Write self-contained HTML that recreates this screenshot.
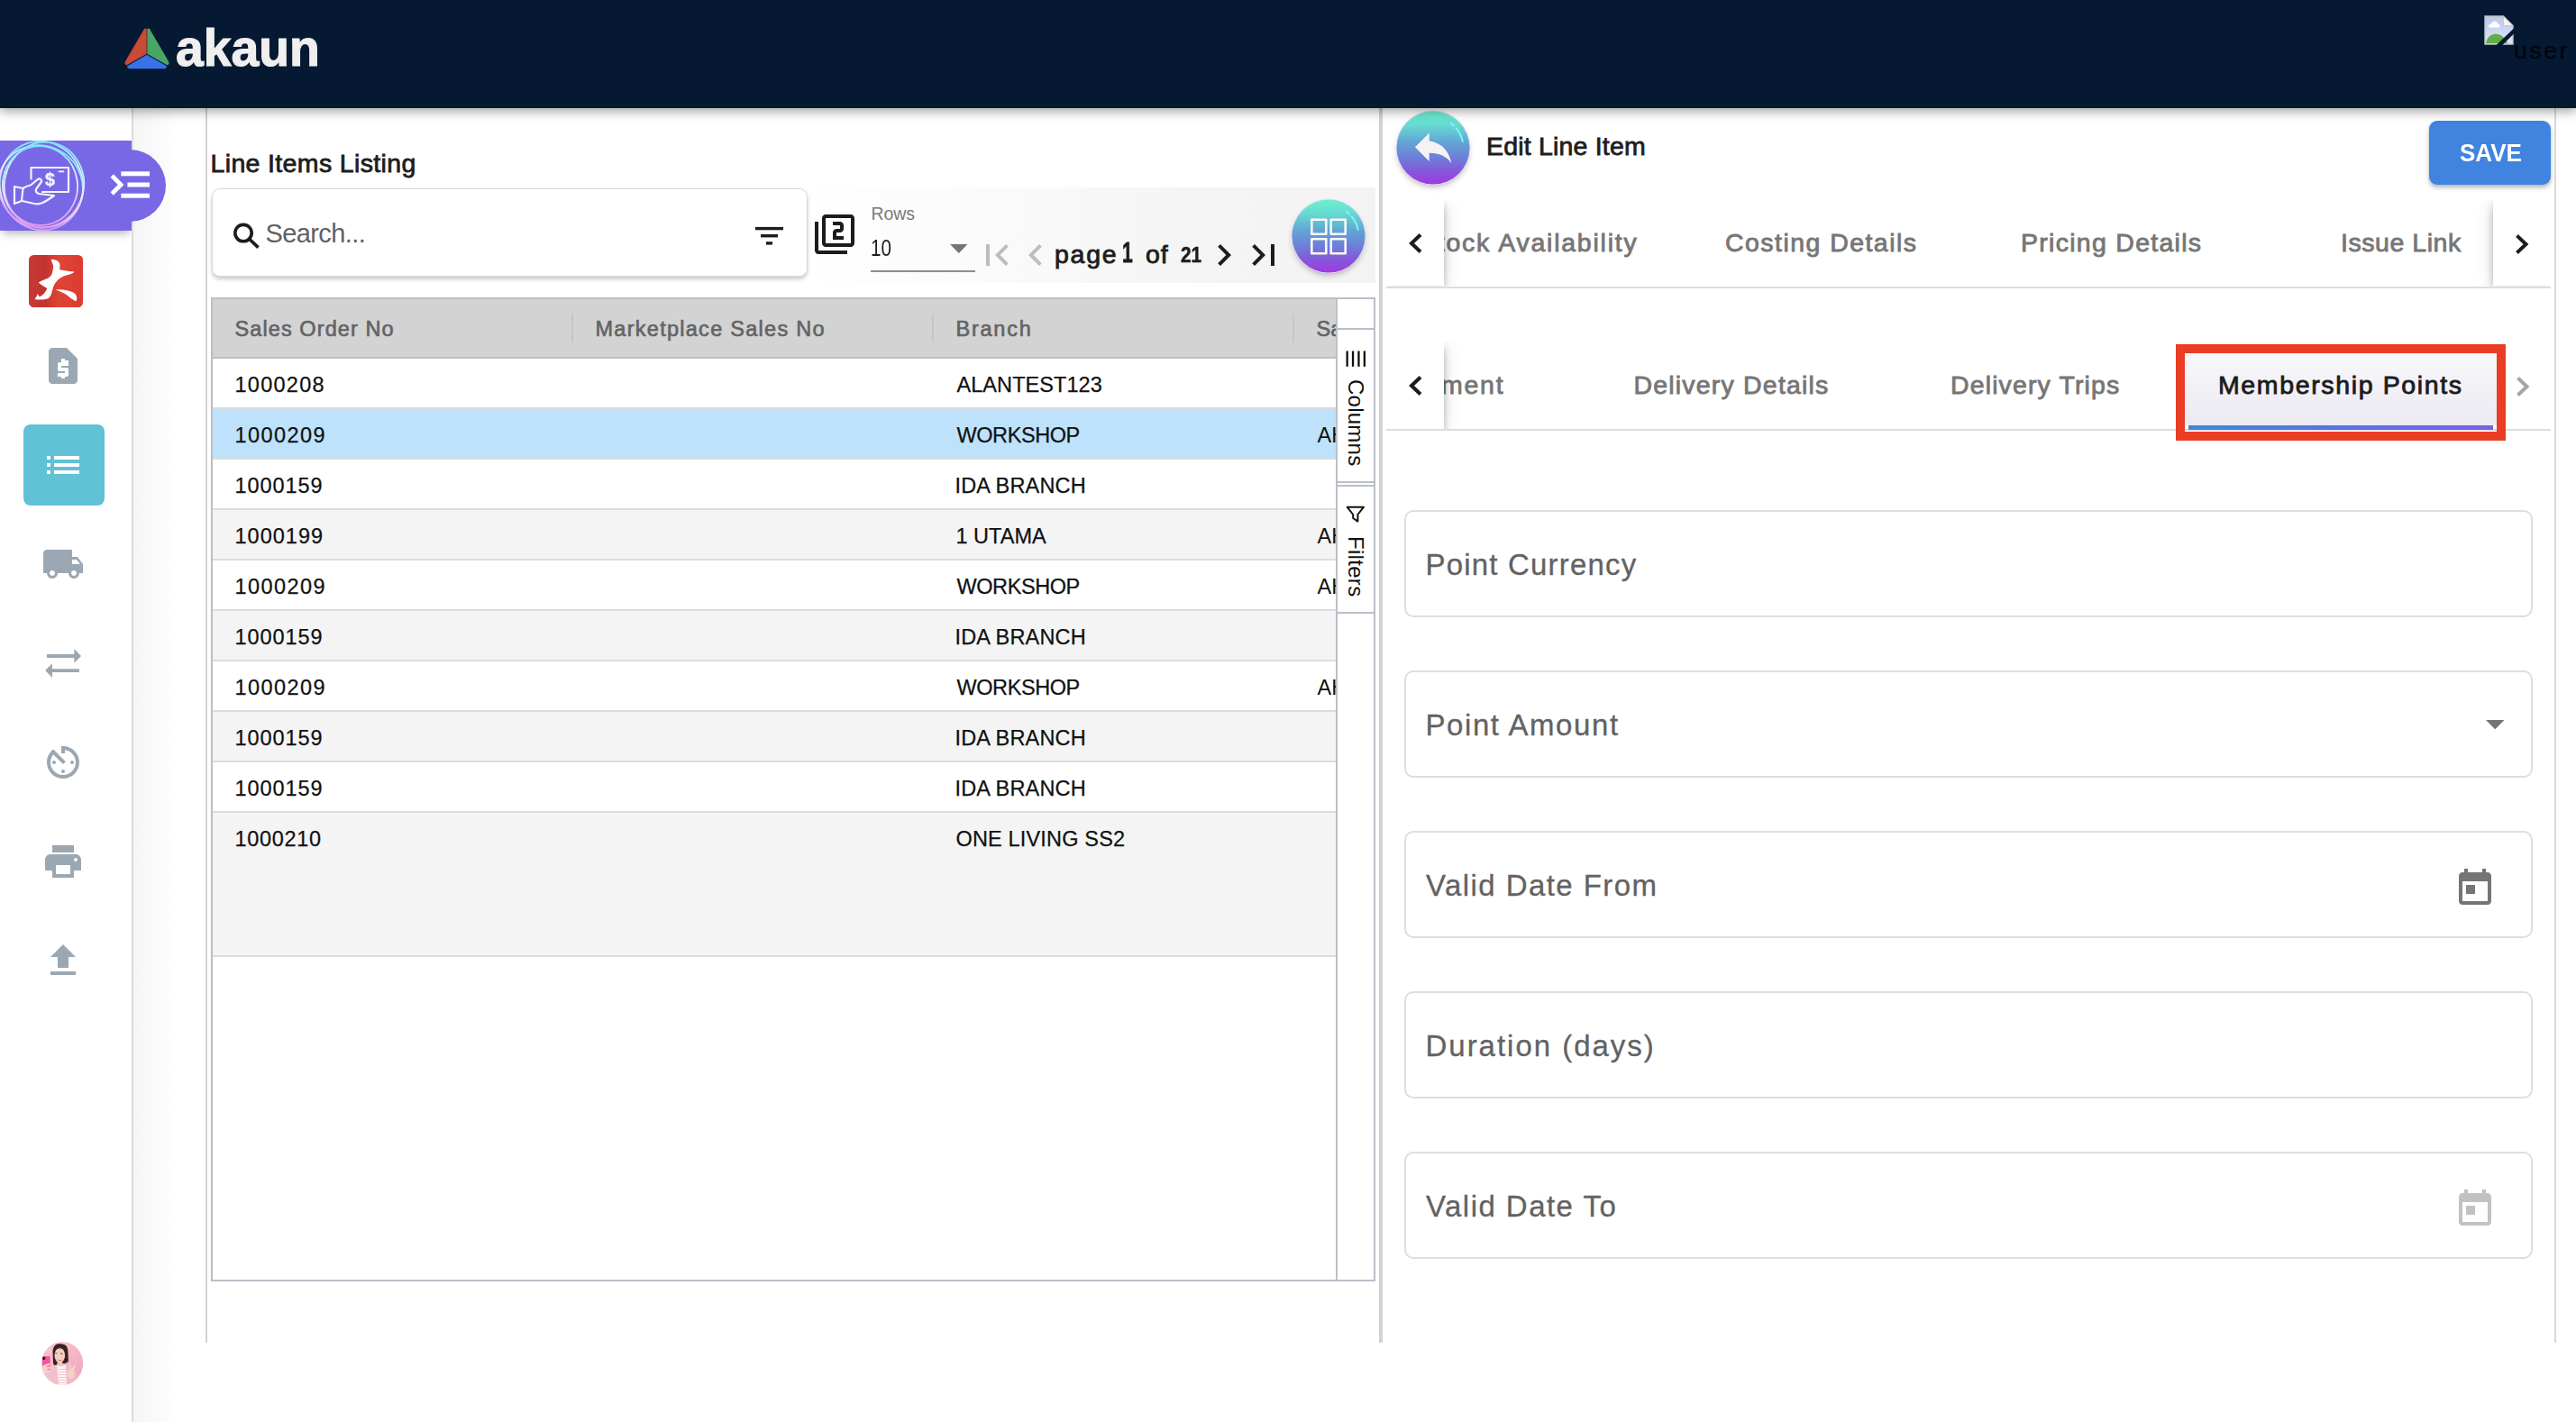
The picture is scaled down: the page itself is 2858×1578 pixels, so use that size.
<!DOCTYPE html>
<html lang="en"><head><meta charset="utf-8"><title>akaun - Edit Line Item</title>
<style>
*{box-sizing:border-box;margin:0;padding:0}
html,body{width:2858px;height:1578px;background:#fff;overflow:hidden}
body{font-family:"Liberation Sans",sans-serif;position:relative}
#app{position:absolute;left:0;top:0;width:2858px;height:1578px;overflow:hidden;background:#fff}
#app div,#app span.t,#app svg.a{position:absolute}
span.t{white-space:nowrap;display:block}
.clip{overflow:hidden}
</style></head>
<body><div id="app">
<div class="hdr" style="left:0px;top:0px;width:2858px;height:120px;background:#061932;box-shadow:0 3px 12px rgba(0,0,0,.4);z-index:20"><svg class="a" style="left:130px;top:24px" width="66" height="60" viewBox="130 24 66 60"><path d="M161.9 33.2 Q162 31.6 160.6 32.6 L139.6 68.6 Q138.6 71 140.6 71.4 L161.9 59.2 Z" fill="#c94a35" stroke="#c94a35" stroke-width="1.6" stroke-linejoin="round"/><path d="M164.1 33.2 Q164 31.6 165.4 32.6 L186.4 68.6 Q187.4 71 185.4 71.4 L164.1 59.2 Z" fill="#49a567" stroke="#49a567" stroke-width="1.6" stroke-linejoin="round"/><path d="M163 61.6 L142 73.6 Q141.4 75.2 143.4 75.4 L182.6 75.4 Q184.6 75.2 184 73.6 Z" fill="#3871e8" stroke="#3871e8" stroke-width="1.6" stroke-linejoin="round"/></svg><span class="t" style="left:195.0px;top:23.9px;font-size:58px;line-height:58px;color:#efefef;font-weight:700;transform:scaleX(0.953);transform-origin:0 0;-webkit-text-stroke:1.2px #efefef;">akaun</span><svg class="a" style="left:2755.500px;top:16.500px" width="33" height="33" viewBox="0 0 34 34"><defs><linearGradient id="sky" x1="0" y1="0" x2="0" y2="1"><stop offset="0" stop-color="#b9c9ee"/><stop offset="1" stop-color="#dfe7f8"/></linearGradient></defs><path d="M1 1 H22 L33 12 V33 H1 Z" fill="url(#sky)" stroke="#c4c4c4" stroke-width="1.4"/><path d="M22 1 V12 H33 Z" fill="#f4f4f4" stroke="#c4c4c4" stroke-width="1"/><path d="M2 32 Q4 22 13 21 Q22 21 27 32 Z" fill="#62ad49"/><path d="M5 13 Q5 10 8 10 Q9 7 12 7 Q15 7 16 10 Q18 10 18 12.5 Q18 14 16 14 H7 Q5 14 5 13Z" fill="#fff"/><path d="M14 34 L34 15 L34 21 L21 34 Z" fill="#061932"/></svg><span class="t" style="left:2789.0px;top:42.8px;font-size:26.5px;line-height:26.5px;color:#01060f;letter-spacing:2.59px;-webkit-text-stroke:0.5px #01060f;">user</span></div><div style="left:0px;top:120px;width:146px;height:1458px;background:#fff"></div><div style="left:146px;top:120px;width:2px;height:1458px;background:#dcdcdc"></div><div style="left:148px;top:120px;width:52px;height:1458px;background:linear-gradient(to right,#f5f5f5,#fff)"></div><div style="left:0px;top:156px;width:146px;height:100px;background:#7968e5;box-shadow:0 6px 9px -3px rgba(0,0,0,.3);clip-path:inset(0 0 -20px 0)"></div><div style="left:100px;top:166px;width:84px;height:80px;background:#7968e5;border-radius:40px"></div><svg class="a" style="left:0;top:150px" width="146" height="112" viewBox="0 150 146 112" fill="none"><defs><linearGradient id="rg" x1="0" y1="0" x2="0" y2="1"><stop offset="0" stop-color="#7fe3fb"/><stop offset=".5" stop-color="#e9eefc"/><stop offset="1" stop-color="#dc98f4"/></linearGradient></defs><g stroke="url(#rg)" stroke-width="1.8"><ellipse cx="46" cy="206" rx="46" ry="49.500" transform="rotate(-15 46 206)"/><ellipse cx="45" cy="207" rx="47.500" ry="45" transform="rotate(30 45 207)"/><ellipse cx="49" cy="205" rx="44" ry="47.500" transform="rotate(12 49 205)"/><ellipse cx="44.500" cy="206" rx="41.500" ry="44" transform="rotate(-8 44.500 206)"/></g></svg><svg class="a" style="left:10px;top:180px" width="72" height="52" viewBox="10 180 72 52" fill="none" stroke="#f4f2ff" stroke-width="2.2" stroke-linejoin="round" stroke-linecap="round"><path d="M34.5 198.5 V186 H76 V213 H47"/><path d="M65.5 190.3 H70.5" stroke-width="1.8"/><path d="M16 207 L25.5 209 L24 223 L16 226 Z"/><path d="M25.5 209 Q29 206.5 34 205.5 L42 199 Q44.5 197.5 46 200 Q46.5 201.5 45 203 L40 210 Q39 213.5 43 215 L60 217 Q52 223 46 225.5 Q42 226.8 38 226 L24.5 223"/></svg><span class="t" style="left:49.8px;top:188.9px;font-size:20px;line-height:20px;color:#f4f2ff;font-weight:700;transform:scaleX(0.982);transform-origin:0 0;-webkit-text-stroke:0.4px #f4f2ff;">$</span><svg class="a" style="left:120px;top:186px" width="50" height="38" viewBox="120 186 50 38"><g fill="#fff"><rect x="134.3" y="190.3" width="31.7" height="5"/><rect x="141.4" y="202.5" width="24.6" height="5"/><rect x="134.3" y="214.7" width="31.7" height="5"/></g><path d="M124.2 195 L134.2 205 L124.2 215" fill="none" stroke="#fff" stroke-width="4.6"/></svg><svg class="a" style="left:32px;top:283px" width="60" height="58" viewBox="0 0 60 58"><defs><linearGradient id="rd" x1="0" y1="0" x2="1" y2="0"><stop offset="0" stop-color="#c63a35"/><stop offset=".3" stop-color="#c23330"/><stop offset=".55" stop-color="#df4434"/><stop offset="1" stop-color="#dc3b31"/></linearGradient></defs><rect width="60" height="58" rx="5.5" fill="url(#rd)"/><path d="M24.8 4.8 C28 4.8 32.6 6 34 9 C35 12 34 14 34.2 16.2 C40 17.6 46 17.8 50.4 18.6 C49.6 21 44 21.6 38.6 23.6 C33 26 29.6 30 27.4 35 C25.6 39.6 25.6 44 22.6 47.4 C19 50 12 49.4 7 49.2 C6.6 48 9.6 45.4 9.6 43 C11 44.4 11 46 11.6 46.2 C14.6 45.6 17.4 43 20.4 37 C17 35 13.6 33.4 10.8 30.6 C11.4 29.4 19 27.2 22.6 24.8 C26 22.6 26.4 19 27.2 12.6 C26.6 9 24.4 6.6 24.8 4.8 Z" fill="#fff"/><path d="M29.6 38.4 C36 37.6 44 38.6 49.8 41.8 C53.6 44.4 54 48.6 52.4 51.2 C48.6 50.4 44 45.4 39.6 42.8 C36 40.6 32 39.4 29.6 38.4 Z" fill="#fff"/></svg><svg class="a" style="left:46px;top:382px" width="48" height="48" viewBox="0 0 24 24" fill="#9ba8b3" ><path d="M14 2H6c-1.1 0-2 .9-2 2v16c0 1.1.9 2 2 2h12c1.1 0 2-.9 2-2V8l-6-6zm1 10h-4v1h3c.55 0 1 .45 1 1v3c0 .55-.45 1-1 1h-1v1h-2v-1H9v-2h4v-1h-3c-.55 0-1-.45-1-1v-3c0-.55.45-1 1-1h1V8h2v1h2v2z"/></svg><div style="left:26px;top:471px;width:90px;height:90px;background:#60c1d7;border-radius:8px"></div><svg class="a" style="left:46px;top:492px" width="48" height="48" viewBox="0 0 24 24" fill="#fff" ><path d="M3 13h2v-2H3v2zm0 4h2v-2H3v2zm0-8h2V7H3v2zm4 4h14v-2H7v2zm0 4h14v-2H7v2zM7 7v2h14V7H7z"/></svg><svg class="a" style="left:46px;top:602px" width="48" height="48" viewBox="0 0 24 24" fill="#9ba8b3" ><path d="M20 8h-3V4H3c-1.1 0-2 .9-2 2v11h2c0 1.66 1.34 3 3 3s3-1.34 3-3h6c0 1.66 1.34 3 3 3s3-1.34 3-3h2v-5l-3-4zM6 18.5c-.83 0-1.5-.67-1.5-1.5s.67-1.5 1.5-1.5 1.5.67 1.5 1.5-.67 1.5-1.5 1.5zm13.500-9l1.960 2.500H17V9.500h2.500zm-1.500 9c-.83 0-1.5-.67-1.5-1.500s.67-1.500 1.500-1.500 1.500.67 1.500 1.500-.67 1.500-1.500 1.500z"/></svg><svg class="a" style="left:46px;top:712px" width="48" height="48" viewBox="46 712 48 48" fill="#9ba8b3"><path d="M52 726 H82.3 V720 L90 728 L82.3 735.8 V730 H52 Z"/><path d="M88 742.2 H57.9 V736.3 L50.2 744.1 L57.9 752 V745.9 H88 Z"/></svg><svg class="a" style="left:46px;top:822px" width="48" height="48" viewBox="0 0 24 24" fill="#9ba8b3" ><path d="M11 17c0 .55.45 1 1 1s1-.45 1-1-.45-1-1-1-1 .45-1 1zm0-14v4h2V5.080c3.390.49 6 3.390 6 6.920 0 3.870-3.130 7-7 7s-7-3.130-7-7c0-1.680.59-3.220 1.580-4.420L12 13l1.410-1.410-6.800-6.800v.02C4.420 6.450 3 9.050 3 12c0 4.970 4.020 9 9 9 4.970 0 9-4.030 9-9s-4.030-9-9-9h-1zm7 9c0-.55-.45-1-1-1s-1 .45-1 1 .45 1 1 1 1-.45 1-1zM6 12c0 .55.45 1 1 1s1-.45 1-1-.45-1-1-1-1 .45-1 1z"/></svg><svg class="a" style="left:46px;top:932px" width="48" height="48" viewBox="0 0 24 24" fill="#9ba8b3" ><path d="M19 8H5c-1.660 0-3 1.340-3 3v6h4v4h12v-4h4v-6c0-1.660-1.340-3-3-3zm-3 11H8v-5h8v5zm3-7c-.55 0-1-.45-1-1s.45-1 1-1 1 .45 1 1-.45 1-1 1zm-1-9H6v4h12V3z"/></svg><svg class="a" style="left:46px;top:1042px" width="48" height="48" viewBox="0 0 24 24" fill="#9ba8b3" ><path d="M9 16h6v-6h4l-7-7-7 7h4zm-4 2h14v2H5z"/></svg><svg class="a" style="left:46px;top:1489px" width="46.200" height="48" viewBox="0 0 46 48"><defs><clipPath id="av"><ellipse cx="23" cy="24" rx="23" ry="24"/></clipPath><linearGradient id="avb" x1="0" y1="0" x2="1" y2="1"><stop offset="0" stop-color="#f8c9d3"/><stop offset="1" stop-color="#efa5bb"/></linearGradient><filter id="avf" x="-10%" y="-10%" width="120%" height="120%"><feGaussianBlur stdDeviation="0.45"/></filter></defs><g clip-path="url(#av)"><rect width="46" height="48" fill="url(#avb)"/><g filter="url(#avf)"><path d="M17.500 2.600 C14 3.600 12.200 8 12.400 12 L12.900 23.600 Q13.600 26.600 15.200 27.600 L18 24 L26.500 24 L27.400 23.300 Q29.900 23 29.800 21 L29.300 11.800 C29.400 7 28 4.200 25.600 3.200 C23 2 20 2 17.500 2.600 Z" fill="#37211f"/><ellipse cx="20.200" cy="15.200" rx="5.800" ry="8.300" fill="#f4cfc1"/><path d="M14.800 9 Q17 5.500 20.500 5 Q24 5.500 26.200 9.500 Q23 7 20.500 7.200 Q17.500 7 14.800 9Z" fill="#4a2e2a"/><rect x="17.400" y="22.500" width="5.800" height="5" fill="#f1c6b7"/><path d="M10.800 26.400 L17.500 25.500 L18 48 L3 48 L4 40 Q5.500 30 10.800 26.400 Z" fill="#f4bfcd"/><path d="M26.800 25.800 L34 28.600 Q38.500 31.500 39.500 40 L40 48 L26 48 Z" fill="#f2b9c9"/><path d="M17 26 Q20.500 28.500 26.800 25.600 L27.800 48 L18.800 48 Z" fill="#fdf3f3"/><g stroke="#f6c5cf" stroke-width="1"><path d="M18 30.500 H27 M18.200 33.500 H27.200 M18.400 36.500 H27.400 M18.600 39.500 H27.500 M18.700 42.500 H27.600 M18.800 45.500 H27.700"/></g><rect x="0.800" y="16" width="8.700" height="17" rx="1.400" fill="#ee56a4"/><rect x="1.200" y="16.800" width="2.800" height="3.200" rx="0.800" fill="#2c1a22"/><path d="M0.600 27 Q4 24.500 9 23.800 L9.500 25.400 L4.500 28 L10 27.500 L10.200 29.500 L4.800 31 L10 31.200 L9.800 33.200 L5 34 Q2.500 35.800 0.600 35 Z" fill="#f6d3c5"/><path d="M31 24.400 L32.200 24.600 L33 31 L36.800 25 L38 25.600 L35.600 32.500 Q36.400 36 35 39.500 Q32.500 42 29.800 40 Q28 36.500 29 32.500 Q30 31 31.400 31.400 Z" fill="#f5d2c3"/><path d="M16.800 19.600 Q20.200 22.800 23.600 19.400 Q20.200 20.600 16.800 19.600 Z" fill="#d9596f"/><path d="M17.400 19.700 Q20.200 21 23 19.600 Q20.200 20.200 17.400 19.700Z" fill="#fff"/><ellipse cx="16.200" cy="12.800" rx="1.300" ry="0.500" fill="#5a3a36"/><ellipse cx="22" cy="13.100" rx="1.300" ry="0.700" fill="#4a2c2a"/></g></g></svg><div style="left:228px;top:120px;width:2px;height:1370px;background:#d1d1d1"></div><span class="t" style="left:233.5px;top:166.9px;font-size:28.5px;line-height:28.5px;color:#1d1d1d;letter-spacing:0.35px;-webkit-text-stroke:0.8px #1d1d1d;">Line Items Listing</span><div style="left:880px;top:208px;width:646px;height:106px;background:linear-gradient(to right,#fff,#fbfbfb 30%,#f5f5f5 65%,#f3f3f3)"></div><div style="left:235px;top:209px;width:660.5px;height:97.5px;background:#fff;border:1.5px solid #d9d9d9;border-radius:9px;box-shadow:0 3px 4px rgba(0,0,0,.2)"></div><svg class="a" style="left:256px;top:244px" width="36" height="36" viewBox="256 244 36 36" fill="none" stroke="#1c1c1c" stroke-width="3.6"><circle cx="270" cy="258.600" r="9.2"/><path d="M276.600 265.200 L286.500 274.600"/></svg><span class="t" style="left:294.5px;top:244.5px;font-size:29px;line-height:29px;color:#616161;letter-spacing:-0.60px;">Search...</span><svg class="a" style="left:836px;top:250px" width="36" height="24" viewBox="836 250 36 24" fill="#1c1c1c"><rect x="838" y="251.900" width="31" height="3.4"/><rect x="844" y="260" width="19" height="3.4"/><rect x="850" y="268.200" width="7" height="3.400"/></svg><svg class="a" style="left:902px;top:236px" width="48" height="48" viewBox="0 0 24 24" fill="#1c1c1c" ><path d="M3 5H1v16c0 1.100.9 2 2 2h16v-2H3V5zm18-4H7c-1.100 0-2 .9-2 2v14c0 1.100.9 2 2 2h14c1.100 0 2-.9 2-2V3c0-1.100-.9-2-2-2zm0 16H7V3h14v14zm-4-4h-4v-2h2c1.100 0 2-.89 2-2V7c0-1.110-.9-2-2-2h-4v2h4v2h-2c-1.100 0-2 .89-2 2v4h6v-2z"/></svg><span class="t" style="left:966.5px;top:228.1px;font-size:19.5px;line-height:19.5px;color:#7b7b7b;letter-spacing:-0.07px;">Rows</span><span class="t" style="left:966.4px;top:261.8px;font-size:26px;line-height:26px;color:#1d1d1d;transform:scaleX(0.794);transform-origin:0 0;">10</span><svg class="a" style="left:1054px;top:271px" width="20" height="10" viewBox="0 0 20 10"><path d="M0 0 H19.5 L9.750 10 Z" fill="#757575"/></svg><div style="left:966px;top:300px;width:116px;height:2px;background:#8d8d8d"></div><svg class="a" style="left:1082px;top:259px" width="48" height="48" viewBox="0 0 24 24" fill="#bdbdbd" ><path d="M18.410 16.590L13.820 12l4.590-4.590L17 6l-6 6 6 6zM6 6h2v12H6z"/></svg><svg class="a" style="left:1125px;top:259px" width="48" height="48" viewBox="0 0 24 24" fill="#bdbdbd" ><path d="M15.410 7.410L14 6l-6 6 6 6 1.410-1.410L10.830 12z"/></svg><span class="t" style="left:1170.0px;top:267.5px;font-size:28.5px;line-height:28.5px;color:#1d1d1d;letter-spacing:1.72px;-webkit-text-stroke:0.85px #1d1d1d;">page</span><span class="t" style="left:1244.9px;top:265.4px;font-size:31px;line-height:31px;color:#1d1d1d;font-weight:700;transform:scaleX(0.681);transform-origin:0 0;-webkit-text-stroke:0.8px #1d1d1d;">1</span><span class="t" style="left:1271.0px;top:267.5px;font-size:28.5px;line-height:28.5px;color:#1d1d1d;letter-spacing:0.95px;-webkit-text-stroke:0.85px #1d1d1d;">of</span><span class="t" style="left:1310.0px;top:270.9px;font-size:24.5px;line-height:24.5px;color:#1d1d1d;font-weight:700;transform:scaleX(0.853);transform-origin:0 0;-webkit-text-stroke:0.5px #1d1d1d;">21</span><svg class="a" style="left:1333.8px;top:259px" width="48" height="48" viewBox="0 0 24 24" fill="#1c1c1c" ><path d="M10 6L8.590 7.410 13.170 12l-4.580 4.590L10 18l6-6z"/></svg><svg class="a" style="left:1377.8px;top:259px" width="48" height="48" viewBox="0 0 24 24" fill="#1c1c1c" ><path d="M5.590 7.410L10.180 12l-4.590 4.590L7 18l6-6-6-6zM16 6h2v12h-2z"/></svg><svg class="a" style="left:1419px;top:207px;overflow:visible" width="110" height="116" viewBox="-55 -55 110 116"><defs><linearGradient id="g1" x1="0" y1="0" x2="0" y2="1"><stop offset="0" stop-color="#6cf0d2"/><stop offset=".18" stop-color="#66dcd2"/><stop offset=".42" stop-color="#62a6d5"/><stop offset=".62" stop-color="#6c82d8"/><stop offset=".82" stop-color="#8558da"/><stop offset="1" stop-color="#a238e0"/></linearGradient><filter id="g1f" x="-30%" y="-30%" width="160%" height="170%"><feGaussianBlur stdDeviation="3.5"/></filter></defs><circle cx="0" cy="4" r="39" fill="rgba(0,0,0,.32)" filter="url(#g1f)"/><circle cx="0" cy="0" r="41.400" fill="#eadff3"/><circle cx="0" cy="0" r="40.500" fill="url(#g1)"/><path d="M19.700 -27.100 A33.500 33.500 0 0 1 22.900 -24.400" fill="none" stroke="#84f3f6" stroke-width="2" stroke-linecap="round"/><path d="M25.400 -21.800 A33.500 33.500 0 0 1 32.800 -7.100" fill="none" stroke="#84f3f6" stroke-width="2" stroke-linecap="round"/><g fill="none" stroke="#fbf8f6" stroke-width="2.6" stroke-linejoin="round"><rect x="-18.700" y="-18.200" width="16" height="16"/><rect x="2.700" y="-18.200" width="16" height="16"/><rect x="-18.700" y="3.300" width="16" height="16"/><rect x="2.700" y="3.300" width="16" height="16"/></g></svg><div style="left:234px;top:330px;width:1292px;height:1092px;border:2px solid #babfc7;background:#fff"></div><div style="left:236px;top:332px;width:1246px;height:64px;background:#d3d3d3"></div><div style="left:236px;top:396px;width:1246px;height:2px;background:#babfc7"></div><div style="left:634px;top:348px;width:2px;height:32px;background:#c2c7cd"></div><div style="left:1034px;top:348px;width:2px;height:32px;background:#c2c7cd"></div><div style="left:1434px;top:348px;width:2px;height:32px;background:#c2c7cd"></div><span class="t" style="left:260.5px;top:353.7px;font-size:23.5px;line-height:23.5px;color:#636466;letter-spacing:1.09px;-webkit-text-stroke:0.65px #636466;">Sales Order No</span><span class="t" style="left:660.5px;top:353.7px;font-size:23.5px;line-height:23.5px;color:#636466;letter-spacing:1.27px;-webkit-text-stroke:0.65px #636466;">Marketplace Sales No</span><span class="t" style="left:1060.5px;top:353.7px;font-size:23.5px;line-height:23.5px;color:#636466;letter-spacing:1.76px;-webkit-text-stroke:0.65px #636466;">Branch</span><div class="clip" style="left:1440px;top:340px;width:42px;height:50px;"><span class="t" style="left:20.5px;top:13.7px;font-size:23.5px;line-height:23.5px;color:#636466;-webkit-text-stroke:0.65px #636466;">Sa</span></div><div style="left:236px;top:398px;width:1246px;height:54px;background:#fff"></div><div style="left:236px;top:452px;width:1246px;height:2px;background:#dadde0"></div><span class="t" style="left:260.5px;top:415.5px;font-size:23.5px;line-height:23.5px;color:#111;letter-spacing:1.26px;-webkit-text-stroke:0.25px #111;">1000208</span><span class="t" style="left:1061.5px;top:415.5px;font-size:23.5px;line-height:23.5px;color:#111;letter-spacing:0.06px;-webkit-text-stroke:0.25px #111;">ALANTEST123</span><div style="left:236px;top:454px;width:1246px;height:54px;background:#bee2fb"></div><div style="left:236px;top:508px;width:1246px;height:2px;background:#dadde0"></div><span class="t" style="left:260.5px;top:471.5px;font-size:23.5px;line-height:23.5px;color:#111;letter-spacing:1.43px;-webkit-text-stroke:0.25px #111;">1000209</span><span class="t" style="left:1061.5px;top:471.5px;font-size:23.5px;line-height:23.5px;color:#111;letter-spacing:-0.43px;-webkit-text-stroke:0.25px #111;">WORKSHOP</span><div class="clip" style="left:1440px;top:454px;width:42px;height:54px;"><span class="t" style="left:21.5px;top:17.5px;font-size:23.5px;line-height:23.5px;color:#111;">AH</span></div><div style="left:236px;top:510px;width:1246px;height:54px;background:#fff"></div><div style="left:236px;top:564px;width:1246px;height:2px;background:#dadde0"></div><span class="t" style="left:260.5px;top:527.5px;font-size:23.5px;line-height:23.5px;color:#111;letter-spacing:0.93px;-webkit-text-stroke:0.25px #111;">1000159</span><span class="t" style="left:1059.5px;top:527.5px;font-size:23.5px;line-height:23.5px;color:#111;letter-spacing:0.17px;-webkit-text-stroke:0.25px #111;">IDA BRANCH</span><div style="left:236px;top:566px;width:1246px;height:54px;background:#f4f4f4"></div><div style="left:236px;top:620px;width:1246px;height:2px;background:#dadde0"></div><span class="t" style="left:260.5px;top:583.5px;font-size:23.5px;line-height:23.5px;color:#111;letter-spacing:1.01px;-webkit-text-stroke:0.25px #111;">1000199</span><span class="t" style="left:1060.5px;top:583.5px;font-size:23.5px;line-height:23.5px;color:#111;letter-spacing:0.01px;-webkit-text-stroke:0.25px #111;">1 UTAMA</span><div class="clip" style="left:1440px;top:566px;width:42px;height:54px;"><span class="t" style="left:21.5px;top:17.5px;font-size:23.5px;line-height:23.5px;color:#111;">AH</span></div><div style="left:236px;top:622px;width:1246px;height:54px;background:#fff"></div><div style="left:236px;top:676px;width:1246px;height:2px;background:#dadde0"></div><span class="t" style="left:260.5px;top:639.5px;font-size:23.5px;line-height:23.5px;color:#111;letter-spacing:1.43px;-webkit-text-stroke:0.25px #111;">1000209</span><span class="t" style="left:1061.5px;top:639.5px;font-size:23.5px;line-height:23.5px;color:#111;letter-spacing:-0.43px;-webkit-text-stroke:0.25px #111;">WORKSHOP</span><div class="clip" style="left:1440px;top:622px;width:42px;height:54px;"><span class="t" style="left:21.5px;top:17.5px;font-size:23.5px;line-height:23.5px;color:#111;">AH</span></div><div style="left:236px;top:678px;width:1246px;height:54px;background:#f4f4f4"></div><div style="left:236px;top:732px;width:1246px;height:2px;background:#dadde0"></div><span class="t" style="left:260.5px;top:695.5px;font-size:23.5px;line-height:23.5px;color:#111;letter-spacing:0.93px;-webkit-text-stroke:0.25px #111;">1000159</span><span class="t" style="left:1059.5px;top:695.5px;font-size:23.5px;line-height:23.5px;color:#111;letter-spacing:0.17px;-webkit-text-stroke:0.25px #111;">IDA BRANCH</span><div style="left:236px;top:734px;width:1246px;height:54px;background:#fff"></div><div style="left:236px;top:788px;width:1246px;height:2px;background:#dadde0"></div><span class="t" style="left:260.5px;top:751.5px;font-size:23.5px;line-height:23.5px;color:#111;letter-spacing:1.43px;-webkit-text-stroke:0.25px #111;">1000209</span><span class="t" style="left:1061.5px;top:751.5px;font-size:23.5px;line-height:23.5px;color:#111;letter-spacing:-0.43px;-webkit-text-stroke:0.25px #111;">WORKSHOP</span><div class="clip" style="left:1440px;top:734px;width:42px;height:54px;"><span class="t" style="left:21.5px;top:17.5px;font-size:23.5px;line-height:23.5px;color:#111;">AH</span></div><div style="left:236px;top:790px;width:1246px;height:54px;background:#f4f4f4"></div><div style="left:236px;top:844px;width:1246px;height:2px;background:#dadde0"></div><span class="t" style="left:260.5px;top:807.5px;font-size:23.5px;line-height:23.5px;color:#111;letter-spacing:0.93px;-webkit-text-stroke:0.25px #111;">1000159</span><span class="t" style="left:1059.5px;top:807.5px;font-size:23.5px;line-height:23.5px;color:#111;letter-spacing:0.17px;-webkit-text-stroke:0.25px #111;">IDA BRANCH</span><div style="left:236px;top:846px;width:1246px;height:54px;background:#fff"></div><div style="left:236px;top:900px;width:1246px;height:2px;background:#dadde0"></div><span class="t" style="left:260.5px;top:863.5px;font-size:23.5px;line-height:23.5px;color:#111;letter-spacing:0.93px;-webkit-text-stroke:0.25px #111;">1000159</span><span class="t" style="left:1059.5px;top:863.5px;font-size:23.5px;line-height:23.5px;color:#111;letter-spacing:0.17px;-webkit-text-stroke:0.25px #111;">IDA BRANCH</span><div style="left:236px;top:902px;width:1246px;height:158px;background:#f4f4f4"></div><div style="left:236px;top:1060px;width:1246px;height:2px;background:#dadde0"></div><span class="t" style="left:260.5px;top:919.5px;font-size:23.5px;line-height:23.5px;color:#111;letter-spacing:0.68px;-webkit-text-stroke:0.25px #111;">1000210</span><span class="t" style="left:1060.5px;top:919.5px;font-size:23.5px;line-height:23.5px;color:#111;letter-spacing:0.16px;-webkit-text-stroke:0.25px #111;">ONE LIVING SS2</span><div style="left:1482px;top:332px;width:2px;height:1088px;background:#babfc7"></div><div style="left:1484px;top:332px;width:40px;height:1088px;background:#fff"></div><div style="left:1484px;top:364px;width:40px;height:2px;background:#babfc7"></div><div style="left:1484px;top:534px;width:40px;height:2px;background:#babfc7"></div><div style="left:1484px;top:538px;width:40px;height:2px;background:#babfc7"></div><div style="left:1484px;top:679px;width:40px;height:2px;background:#babfc7"></div><svg class="a" style="left:1492px;top:388px" width="24" height="20" viewBox="1492 388 24 20" fill="#111"><rect x="1493.500" y="389.500" width="2.300" height="17.300"/><rect x="1499.900" y="389.500" width="2.300" height="17.300"/><rect x="1506.300" y="389.500" width="2.300" height="17.300"/><rect x="1512.700" y="389.500" width="2.300" height="17.300"/></svg><div style="left:1484px;top:420.5px;width:40px;height:98px;"><span class="t" style="left:7px;top:0;font-size:24px;line-height:26px;color:#111;transform-origin:0 0;transform:rotate(90deg) translate(0,-26px);letter-spacing:0.25px">Columns</span></div><svg class="a" style="left:1491px;top:559px" width="26" height="24" viewBox="1491 559 26 24" fill="none" stroke="#111" stroke-width="2" stroke-linejoin="round"><path d="M1494.600 562.700 H1513 L1506.400 571 V578.600 L1501.200 575 V571 Z"/></svg><div style="left:1484px;top:595px;width:40px;height:70px;"><span class="t" style="left:7px;top:0;font-size:24px;line-height:26px;color:#111;transform-origin:0 0;transform:rotate(90deg) translate(0,-26px);letter-spacing:0.3px">Filters</span></div><div style="left:1530px;top:120px;width:4px;height:1370px;background:#d2d2d2"></div><div style="left:2834px;top:120px;width:2px;height:1370px;background:#d9d9d9"></div><svg class="a" style="left:1535px;top:108.5px;overflow:visible" width="110" height="116" viewBox="-55 -55 110 116"><defs><linearGradient id="g2" x1="0" y1="0" x2="0" y2="1"><stop offset="0" stop-color="#6cf0d2"/><stop offset=".18" stop-color="#66dcd2"/><stop offset=".42" stop-color="#62a6d5"/><stop offset=".62" stop-color="#6c82d8"/><stop offset=".82" stop-color="#8558da"/><stop offset="1" stop-color="#a238e0"/></linearGradient><filter id="g2f" x="-30%" y="-30%" width="160%" height="170%"><feGaussianBlur stdDeviation="3.5"/></filter></defs><circle cx="0" cy="4" r="39" fill="rgba(0,0,0,.32)" filter="url(#g2f)"/><circle cx="0" cy="0" r="41.400" fill="#eadff3"/><circle cx="0" cy="0" r="40.500" fill="url(#g2)"/><path d="M19.700 -27.100 A33.500 33.500 0 0 1 22.900 -24.400" fill="none" stroke="#84f3f6" stroke-width="2" stroke-linecap="round"/><path d="M25.400 -21.800 A33.500 33.500 0 0 1 32.800 -7.100" fill="none" stroke="#84f3f6" stroke-width="2" stroke-linecap="round"/><path transform="translate(-26.800,-27.800) scale(2.250)" d="M10 9V5l-7 7 7 7v-4.100c5 0 8.500 1.600 11 5.100-1-5-4-10-11-11z" fill="#f3f3f3"/></svg><span class="t" style="left:1649.0px;top:148.4px;font-size:28.5px;line-height:28.5px;color:#1d1d1d;letter-spacing:0.19px;-webkit-text-stroke:0.8px #1d1d1d;">Edit Line Item</span><div style="left:2695px;top:134px;width:135px;height:71px;background:#4084df;border-radius:9px;box-shadow:0 3px 5px rgba(0,0,0,.3)"></div><span class="t" style="left:2728.5px;top:155.7px;font-size:27.5px;line-height:27.5px;color:#fff;font-weight:700;transform:scaleX(0.945);transform-origin:0 0;">SAVE</span><div style="left:1538px;top:317.5px;width:1292px;height:2px;background:#dddddd"></div><div class="clip" style="left:1602px;top:230px;width:300px;height:80px;"><span class="t" style="left:-28.0px;top:24.9px;font-size:28.5px;line-height:28.5px;color:#767676;letter-spacing:1.76px;-webkit-text-stroke:0.85px #767676;">Stock Availability</span></div><span class="t" style="left:1914.0px;top:254.9px;font-size:28.5px;line-height:28.5px;color:#767676;letter-spacing:1.45px;-webkit-text-stroke:0.85px #767676;">Costing Details</span><span class="t" style="left:2242.0px;top:254.9px;font-size:28.5px;line-height:28.5px;color:#767676;letter-spacing:1.28px;-webkit-text-stroke:0.85px #767676;">Pricing Details</span><span class="t" style="left:2597.0px;top:254.9px;font-size:28.5px;line-height:28.5px;color:#767676;letter-spacing:0.55px;-webkit-text-stroke:0.85px #767676;">Issue Link</span><div style="left:1538px;top:222px;width:64px;height:95.5px;background:#fff;box-shadow:0 4px 8px -2px rgba(0,0,0,.2),0 8px 10px 0 rgba(0,0,0,.14),0 2px 20px 0 rgba(0,0,0,.12);clip-path:inset(0 -30px 0 0)"></div><svg class="a" style="left:1562.8px;top:259px" width="15" height="22" viewBox="0 0 15 22" fill="none" stroke="#1c1c1c" stroke-width="4"><path d="M13 1.500 L3 11 L13 20.500"/></svg><div style="left:2766px;top:222px;width:64px;height:95.5px;background:#fff;box-shadow:0 4px 8px -2px rgba(0,0,0,.2),0 8px 10px 0 rgba(0,0,0,.14),0 2px 20px 0 rgba(0,0,0,.12);clip-path:inset(0 0 0 -30px)"></div><svg class="a" style="left:2791px;top:259.5px" width="15" height="22" viewBox="0 0 15 22" fill="none" stroke="#1c1c1c" stroke-width="4"><path d="M1.500 1.500 L11.500 11 L1.500 20.500"/></svg><div style="left:1538px;top:476px;width:1292px;height:2px;background:#dddddd"></div><div class="clip" style="left:1602px;top:390px;width:200px;height:80px;"><span class="t" style="left:-99.1px;top:22.9px;font-size:28.5px;line-height:28.5px;color:#767676;letter-spacing:1.75px;-webkit-text-stroke:0.85px #767676;">Department</span></div><span class="t" style="left:1812.5px;top:412.9px;font-size:28.5px;line-height:28.5px;color:#767676;letter-spacing:1.19px;-webkit-text-stroke:0.85px #767676;">Delivery Details</span><span class="t" style="left:2164.0px;top:412.9px;font-size:28.5px;line-height:28.5px;color:#767676;letter-spacing:1.13px;-webkit-text-stroke:0.85px #767676;">Delivery Trips</span><div style="left:2424px;top:392px;width:346px;height:80px;background:linear-gradient(#f8f7fb,#eceaf1)"></div><div style="left:2428px;top:472px;width:338px;height:4.5px;background:linear-gradient(to right,#3f86df,#7a60e8)"></div><span class="t" style="left:2461.0px;top:412.9px;font-size:28.5px;line-height:28.5px;color:#1c1c1c;letter-spacing:1.63px;-webkit-text-stroke:0.85px #1c1c1c;">Membership Points</span><div style="left:2414px;top:381.5px;width:366px;height:107.5px;border:10.500px solid #e93d24"></div><div style="left:1538px;top:380px;width:64px;height:96px;background:#fff;box-shadow:0 4px 8px -2px rgba(0,0,0,.2),0 8px 10px 0 rgba(0,0,0,.14),0 2px 20px 0 rgba(0,0,0,.12);clip-path:inset(0 -30px 0 0)"></div><svg class="a" style="left:1562.8px;top:417px" width="15" height="22" viewBox="0 0 15 22" fill="none" stroke="#1c1c1c" stroke-width="4"><path d="M13 1.500 L3 11 L13 20.500"/></svg><svg class="a" style="left:2791.6px;top:418px" width="15" height="22" viewBox="0 0 15 22" fill="none" stroke="#a6a6a6" stroke-width="4"><path d="M1.500 1.500 L11.500 11 L1.500 20.500"/></svg><div style="left:1558px;top:566px;width:1251.5px;height:119px;border:2px solid #dedede;border-radius:10px;background:#fff"></div><span class="t" style="left:1581.5px;top:610.3px;font-size:33px;line-height:33px;color:#626262;letter-spacing:1.19px;-webkit-text-stroke:0.3px #626262;">Point Currency</span><div style="left:1558px;top:744px;width:1251.5px;height:119px;border:2px solid #dedede;border-radius:10px;background:#fff"></div><span class="t" style="left:1581.5px;top:788.3px;font-size:33px;line-height:33px;color:#626262;letter-spacing:1.57px;-webkit-text-stroke:0.3px #626262;">Point Amount</span><div style="left:1558px;top:922px;width:1251.5px;height:119px;border:2px solid #dedede;border-radius:10px;background:#fff"></div><span class="t" style="left:1582.0px;top:966.3px;font-size:33px;line-height:33px;color:#626262;letter-spacing:1.43px;-webkit-text-stroke:0.3px #626262;">Valid Date From</span><div style="left:1558px;top:1100px;width:1251.5px;height:119px;border:2px solid #dedede;border-radius:10px;background:#fff"></div><span class="t" style="left:1581.5px;top:1144.3px;font-size:33px;line-height:33px;color:#626262;letter-spacing:1.98px;-webkit-text-stroke:0.3px #626262;">Duration (days)</span><div style="left:1558px;top:1278px;width:1251.5px;height:119px;border:2px solid #dedede;border-radius:10px;background:#fff"></div><span class="t" style="left:1582.0px;top:1322.3px;font-size:33px;line-height:33px;color:#626262;letter-spacing:1.46px;-webkit-text-stroke:0.3px #626262;">Valid Date To</span><svg class="a" style="left:2757.500px;top:799px" width="21" height="11" viewBox="0 0 21 11"><path d="M0 0 H20.500 L10.250 10.250 Z" fill="#757575"/></svg><svg class="a" style="left:2721.8px;top:961.8px" width="48" height="48" viewBox="0 0 24 24" fill="#757575" ><path d="M19 3h-1V1h-2v2H8V1H6v2H5c-1.110 0-1.990.9-1.990 2L3 19c0 1.100.89 2 2 2h14c1.100 0 2-.9 2-2V5c0-1.100-.9-2-2-2zm0 16H5V8h14v11zM7 10h5v5H7z"/></svg><svg class="a" style="left:2721.8px;top:1317.8px" width="48" height="48" viewBox="0 0 24 24" fill="#c2c2c2" ><path d="M19 3h-1V1h-2v2H8V1H6v2H5c-1.110 0-1.990.9-1.990 2L3 19c0 1.100.89 2 2 2h14c1.100 0 2-.9 2-2V5c0-1.100-.9-2-2-2zm0 16H5V8h14v11zM7 10h5v5H7z"/></svg>
</div></body></html>
